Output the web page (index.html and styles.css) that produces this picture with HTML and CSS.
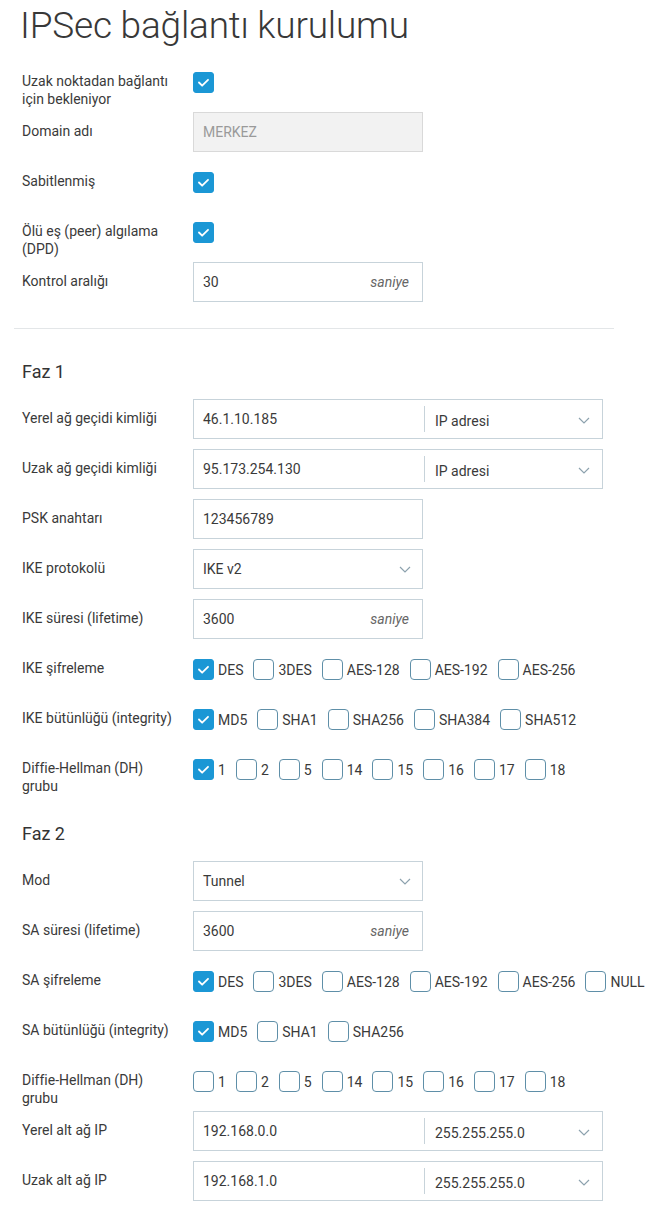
FILE: index.html
```html
<!DOCTYPE html>
<html lang="tr">
<head>
<meta charset="utf-8">
<title>IPSec bağlantı kurulumu</title>
<link rel="stylesheet" href="styles.css">
</head>
<body>
<div class="page">
  <h1 class="title">IPSec bağlantı kurulumu</h1>

  <div class="section">
    <div class="row">
      <div class="label">Uzak noktadan bağlantı için bekleniyor</div>
      <div class="checks"><span class="cb on"><svg viewBox="0 0 21 21"><polyline points="5.5,10.5 9,14 15.5,7.5"/></svg></span></div>
    </div>
    <div class="row">
      <div class="label">Domain adı</div>
      <div class="input disabled">MERKEZ</div>
    </div>
    <div class="row">
      <div class="label">Sabitlenmiş</div>
      <div class="checks"><span class="cb on"><svg viewBox="0 0 21 21"><polyline points="5.5,10.5 9,14 15.5,7.5"/></svg></span></div>
    </div>
    <div class="row">
      <div class="label">Ölü eş (peer) algılama (DPD)</div>
      <div class="checks"><span class="cb on"><svg viewBox="0 0 21 21"><polyline points="5.5,10.5 9,14 15.5,7.5"/></svg></span></div>
    </div>
    <div class="row">
      <div class="label">Kontrol aralığı</div>
      <div class="input"><span class="val">30</span><span class="unit">saniye</span></div>
    </div>
  </div>

  <hr class="divider">

  <div class="section">
    <h2 class="heading first">Faz 1</h2>
    <div class="row">
      <div class="label">Yerel ağ geçidi kimliği</div>
      <div class="split">
        <div class="split-left">46.1.10.185</div>
        <div class="split-right"><span>IP adresi</span><svg class="chev" viewBox="0 0 12 7"><polyline points="1,1 6,6 11,1"/></svg></div>
      </div>
    </div>
    <div class="row">
      <div class="label">Uzak ağ geçidi kimliği</div>
      <div class="split">
        <div class="split-left">95.173.254.130</div>
        <div class="split-right"><span>IP adresi</span><svg class="chev" viewBox="0 0 12 7"><polyline points="1,1 6,6 11,1"/></svg></div>
      </div>
    </div>
    <div class="row">
      <div class="label">PSK anahtarı</div>
      <div class="input"><span class="val">123456789</span></div>
    </div>
    <div class="row">
      <div class="label">IKE protokolü</div>
      <div class="input select"><span class="val">IKE v2</span><svg class="chev" viewBox="0 0 12 7"><polyline points="1,1 6,6 11,1"/></svg></div>
    </div>
    <div class="row">
      <div class="label">IKE süresi (lifetime)</div>
      <div class="input"><span class="val">3600</span><span class="unit">saniye</span></div>
    </div>
    <div class="row">
      <div class="label">IKE şifreleme</div>
      <div class="checks">
        <label class="opt"><span class="cb on"><svg viewBox="0 0 21 21"><polyline points="5.5,10.5 9,14 15.5,7.5"/></svg></span>DES</label>
        <label class="opt"><span class="cb"></span>3DES</label>
        <label class="opt"><span class="cb"></span>AES-128</label>
        <label class="opt"><span class="cb"></span>AES-192</label>
        <label class="opt"><span class="cb"></span>AES-256</label>
      </div>
    </div>
    <div class="row">
      <div class="label">IKE bütünlüğü (integrity)</div>
      <div class="checks">
        <label class="opt"><span class="cb on"><svg viewBox="0 0 21 21"><polyline points="5.5,10.5 9,14 15.5,7.5"/></svg></span>MD5</label>
        <label class="opt"><span class="cb"></span>SHA1</label>
        <label class="opt"><span class="cb"></span>SHA256</label>
        <label class="opt"><span class="cb"></span>SHA384</label>
        <label class="opt"><span class="cb"></span>SHA512</label>
      </div>
    </div>
    <div class="row">
      <div class="label">Diffie-Hellman (DH) grubu</div>
      <div class="checks">
        <label class="opt"><span class="cb on"><svg viewBox="0 0 21 21"><polyline points="5.5,10.5 9,14 15.5,7.5"/></svg></span>1</label>
        <label class="opt"><span class="cb"></span>2</label>
        <label class="opt"><span class="cb"></span>5</label>
        <label class="opt"><span class="cb"></span>14</label>
        <label class="opt"><span class="cb"></span>15</label>
        <label class="opt"><span class="cb"></span>16</label>
        <label class="opt"><span class="cb"></span>17</label>
        <label class="opt"><span class="cb"></span>18</label>
      </div>
    </div>

    <h2 class="heading">Faz 2</h2>
    <div class="row">
      <div class="label">Mod</div>
      <div class="input select"><span class="val">Tunnel</span><svg class="chev" viewBox="0 0 12 7"><polyline points="1,1 6,6 11,1"/></svg></div>
    </div>
    <div class="row">
      <div class="label">SA süresi (lifetime)</div>
      <div class="input"><span class="val">3600</span><span class="unit">saniye</span></div>
    </div>
    <div class="row">
      <div class="label">SA şifreleme</div>
      <div class="checks">
        <label class="opt"><span class="cb on"><svg viewBox="0 0 21 21"><polyline points="5.5,10.5 9,14 15.5,7.5"/></svg></span>DES</label>
        <label class="opt"><span class="cb"></span>3DES</label>
        <label class="opt"><span class="cb"></span>AES-128</label>
        <label class="opt"><span class="cb"></span>AES-192</label>
        <label class="opt"><span class="cb"></span>AES-256</label>
        <label class="opt"><span class="cb"></span>NULL</label>
      </div>
    </div>
    <div class="row">
      <div class="label">SA bütünlüğü (integrity)</div>
      <div class="checks">
        <label class="opt"><span class="cb on"><svg viewBox="0 0 21 21"><polyline points="5.5,10.5 9,14 15.5,7.5"/></svg></span>MD5</label>
        <label class="opt"><span class="cb"></span>SHA1</label>
        <label class="opt"><span class="cb"></span>SHA256</label>
      </div>
    </div>
    <div class="row">
      <div class="label">Diffie-Hellman (DH) grubu</div>
      <div class="checks">
        <label class="opt"><span class="cb"></span>1</label>
        <label class="opt"><span class="cb"></span>2</label>
        <label class="opt"><span class="cb"></span>5</label>
        <label class="opt"><span class="cb"></span>14</label>
        <label class="opt"><span class="cb"></span>15</label>
        <label class="opt"><span class="cb"></span>16</label>
        <label class="opt"><span class="cb"></span>17</label>
        <label class="opt"><span class="cb"></span>18</label>
      </div>
    </div>
    <div class="row">
      <div class="label">Yerel alt ağ IP</div>
      <div class="split">
        <div class="split-left">192.168.0.0</div>
        <div class="split-right"><span>255.255.255.0</span><svg class="chev" viewBox="0 0 12 7"><polyline points="1,1 6,6 11,1"/></svg></div>
      </div>
    </div>
    <div class="row">
      <div class="label">Uzak alt ağ IP</div>
      <div class="split">
        <div class="split-left">192.168.1.0</div>
        <div class="split-right"><span>255.255.255.0</span><svg class="chev" viewBox="0 0 12 7"><polyline points="1,1 6,6 11,1"/></svg></div>
      </div>
    </div>
  </div>
</div>
</body>
</html>
```

FILE: styles.css
```css
* { box-sizing: border-box; }

body {
  margin: 0;
  background: #ffffff;
  font-family: Roboto, "Noto Sans", "Liberation Sans", sans-serif;
  color: #3a3a3a;
}

.page {
  width: 600px;
  margin-left: 14px;
  padding-top: 4px;
}

.title {
  margin: 0 0 14px 6px;
  font-size: 37px;
  font-weight: 300;
  line-height: 44px;
  color: #383838;
  letter-spacing: -0.2px;
}

.section {
  padding-left: 8px;
}

.row {
  display: flex;
  height: 40px;
  margin-bottom: 10px;
}

.label {
  flex: none;
  width: 171px;
  padding: 10px 16px 0 0;
  font-size: 14px;
  line-height: 18px;
  color: #3a3a3a;
}

.input {
  flex: none;
  display: flex;
  align-items: center;
  justify-content: space-between;
  width: 230px;
  height: 40px;
  padding: 0 13px 0 9px;
  border: 1px solid #c7d3da;
  font-size: 14px;
  color: #3a3a3a;
}

.input.disabled {
  background: #f2f2f2;
  border-color: #d9d9d9;
  color: #9a9a9a;
}

.input.select {
  padding-right: 11px;
}

.unit {
  font-style: italic;
  color: #666666;
}

.chev {
  width: 12px;
  height: 7px;
  fill: none;
  stroke: #8da2ae;
  stroke-width: 1.2;
}

.split {
  flex: none;
  display: flex;
  width: 410px;
  height: 40px;
  border: 1px solid #c7d3da;
  font-size: 14px;
  color: #3a3a3a;
}

.split-left {
  flex: none;
  width: 230px;
  display: flex;
  align-items: center;
  padding-left: 9px;
}

.split-right {
  flex: 1;
  display: flex;
  align-items: center;
  justify-content: space-between;
  margin: 6px 0;
  padding: 3px 12px 0 10px;
  border-left: 1px solid #c7d3da;
}

.checks {
  flex: none;
  display: flex;
  align-items: center;
  align-self: flex-start;
  margin-top: 10px;
  font-size: 14px;
  color: #3a3a3a;
  white-space: nowrap;
}

.opt {
  flex: none;
  display: flex;
  align-items: center;
  gap: 4px;
  margin-right: 10px;
}

.cb {
  flex: none;
  display: block;
  width: 21px;
  height: 21px;
  border: 1px solid #5f8fa8;
  border-radius: 4px;
  background: #ffffff;
}

.cb.on {
  background: #1b97d5;
  border-color: #1b97d5;
  border-radius: 3px;
}

.cb svg {
  display: block;
  width: 19px;
  height: 19px;
  fill: none;
  stroke: #ffffff;
  stroke-width: 2;
  stroke-linecap: round;
  stroke-linejoin: round;
}

.divider {
  margin: 26px 0 31px 0;
  border: 0;
  border-top: 1px solid #e3e6e8;
  height: 0;
}

.heading {
  margin: 0 0 15px 0;
  font-size: 18px;
  font-weight: 400;
  line-height: 24px;
  color: #333333;
}

.heading:not(.first) {
  margin-top: 33px;
}
```
